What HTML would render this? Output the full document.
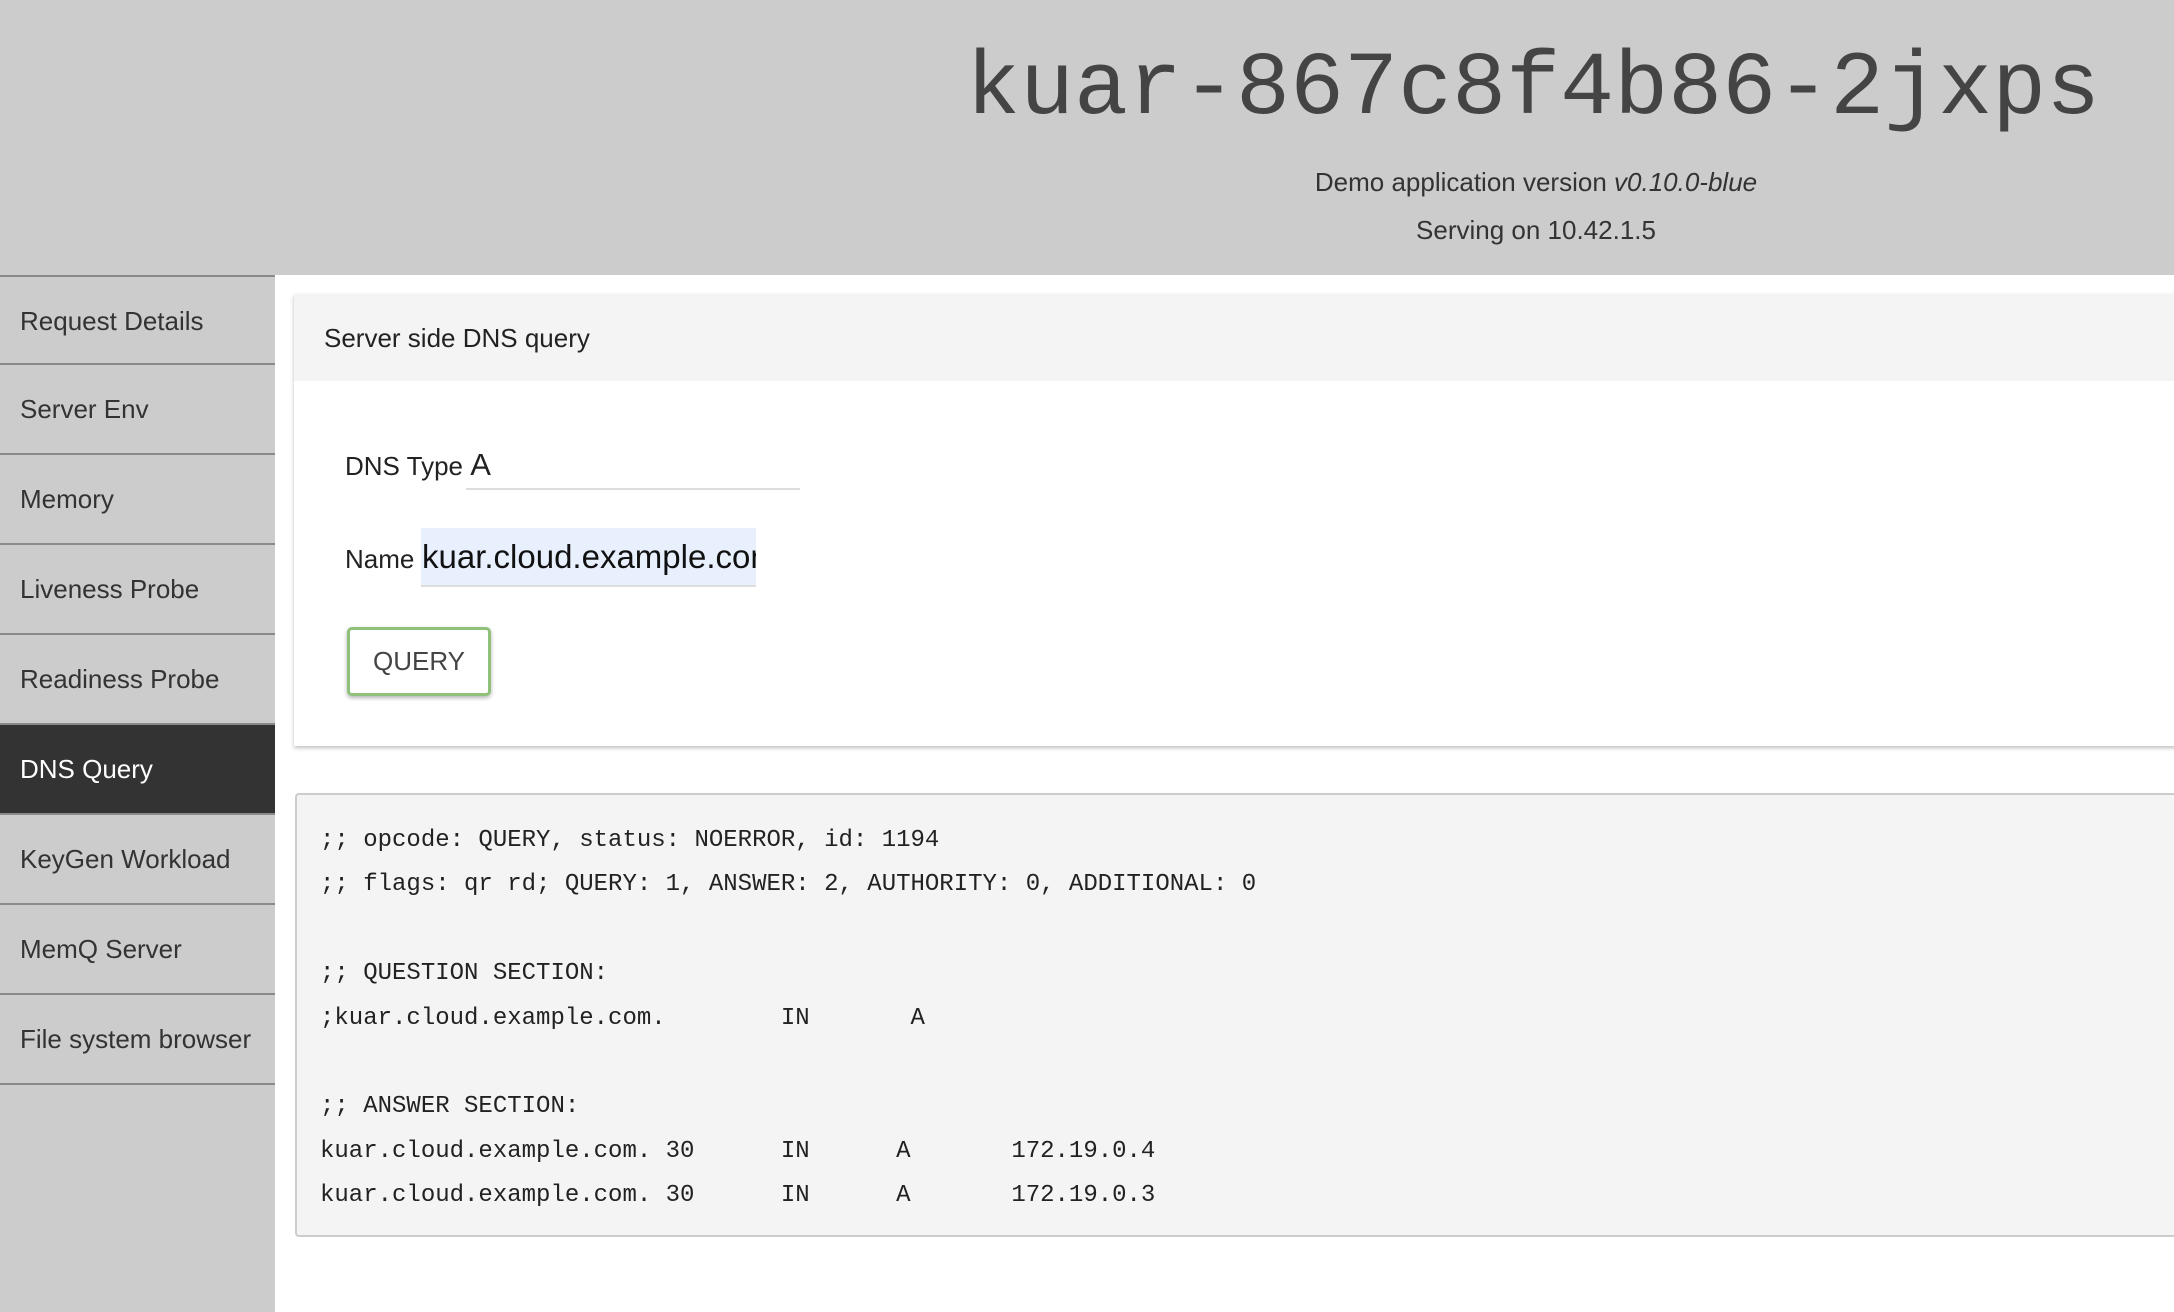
<!DOCTYPE html>
<html><head><meta charset="utf-8"><style>
*{box-sizing:border-box;margin:0;padding:0}
body{width:2174px;height:1312px;overflow:hidden;background:#fff;font-family:"Liberation Sans",Roboto,sans-serif;color:#222;position:relative}
.header{position:absolute;left:0;top:0;width:2174px;height:275px;background:#cccccc}
.title{position:absolute;left:966px;top:30px;font-family:"Liberation Mono",monospace;font-size:90px;color:#444;white-space:nowrap;line-height:120px}
.sub{position:absolute;width:600px;left:1236px;text-align:center;font-size:26px;color:#333;line-height:30px}
.side{position:absolute;left:0;top:275px;width:275px;height:1037px;background:#cccccc}
.item{height:90px;border-bottom:2px solid #8a8a8a;font-size:26px;color:#333;padding-left:20px;line-height:88px}
.item.first{border-top:2px solid #8a8a8a}
.item.active{background:#333;color:#fff}
.card{position:absolute;left:294px;top:294px;width:1900px;height:452px;background:#fff;box-shadow:0 2px 4px rgba(0,0,0,.25)}
.card .hd{height:87px;background:#f4f4f4;font-size:26px;line-height:89px;padding-left:30px;color:#222}
.lbl{position:absolute;font-size:26px;color:#222}
.btn{position:absolute;left:347px;top:627px;width:144px;height:69px;border:3px solid #8fc17a;border-radius:5px;background:#fff;box-shadow:0 2px 4px rgba(0,0,0,.3);font-size:26px;color:#444;text-align:center;line-height:63px}
pre{position:absolute;left:295px;top:793px;width:1900px;height:444px;background:#f4f4f4;border:2px solid #ccc;border-radius:4px;padding:24px 0 0 23px;font-family:"Liberation Mono",monospace;font-size:24px;line-height:44.4px;color:#222;tab-size:8}
</style></head><body>
<div class="header">
<div class="title">kuar-867c8f4b86-2jxps</div>
<div class="sub" style="top:167px">Demo application version <i>v0.10.0-blue</i></div>
<div class="sub" style="top:215px">Serving on 10.42.1.5</div>
</div>
<div class="side">
<div class="item first">Request Details</div>
<div class="item">Server Env</div>
<div class="item">Memory</div>
<div class="item">Liveness Probe</div>
<div class="item">Readiness Probe</div>
<div class="item active">DNS Query</div>
<div class="item">KeyGen Workload</div>
<div class="item">MemQ Server</div>
<div class="item">File system browser</div>
</div>
<div class="card"><div class="hd">Server side DNS query</div></div>
<div class="lbl" style="left:345px;top:447px">DNS Type <span style="font-size:31px">A</span></div>
<div style="position:absolute;left:466px;top:488px;width:334px;height:2px;background:#ddd"></div>
<div style="position:absolute;left:421px;top:528px;width:335px;height:59px;background:#e8f0fe;border-bottom:2px solid #ddd"></div>
<div class="lbl" style="left:345px;top:544px">Name</div>
<div style="position:absolute;left:422px;top:538px;width:334px;overflow:hidden;white-space:nowrap;font-size:33px;color:#111">kuar.cloud.example.com</div>
<div class="btn">QUERY</div>
<pre>;; opcode: QUERY, status: NOERROR, id: 1194
;; flags: qr rd; QUERY: 1, ANSWER: 2, AUTHORITY: 0, ADDITIONAL: 0

;; QUESTION SECTION:
;kuar.cloud.example.com.	IN	 A

;; ANSWER SECTION:
kuar.cloud.example.com.	30	IN	A	172.19.0.4
kuar.cloud.example.com.	30	IN	A	172.19.0.3</pre>
</body></html>
